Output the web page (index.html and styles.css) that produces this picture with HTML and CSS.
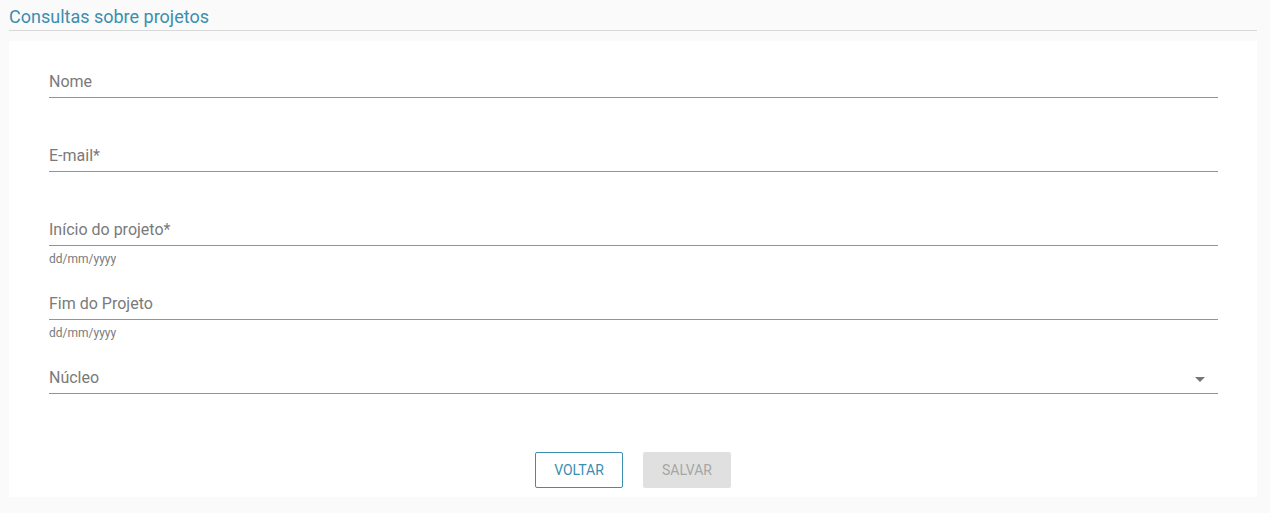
FILE: index.html
```html
<!DOCTYPE html>
<html lang="pt">
<head>
<meta charset="utf-8">
<title>Consultas sobre projetos</title>
<link rel="stylesheet" href="styles.css">
</head>
<body>
<div class="page">
  <h1 class="title">Consultas sobre projetos</h1>
  <form class="card">
    <div class="field">
      <div class="field-row"><span class="label">Nome</span></div>
    </div>
    <div class="field">
      <div class="field-row"><span class="label">E-mail*</span></div>
    </div>
    <div class="field">
      <div class="field-row"><span class="label">Início do projeto*</span></div>
      <div class="hint">dd/mm/yyyy</div>
    </div>
    <div class="field">
      <div class="field-row"><span class="label">Fim do Projeto</span></div>
      <div class="hint">dd/mm/yyyy</div>
    </div>
    <div class="field">
      <div class="field-row"><span class="label">Núcleo</span><span class="arrow"></span></div>
    </div>
    <div class="actions">
      <button type="button" class="btn btn-outline">VOLTAR</button>
      <button type="button" class="btn btn-disabled">SALVAR</button>
    </div>
  </form>
</div>
</body>
</html>
```
FILE: styles.css
```css
* { box-sizing: border-box; }
html, body { margin: 0; padding: 0; background: #fafafa; }
body { font-family: Roboto, "Noto Sans", sans-serif; width: 1270px; height: 513px; overflow: hidden; }
.page { padding: 0 13px 0 9px; }
.title {
  margin: 0;
  font-size: 18px;
  font-weight: 400;
  line-height: 30px;
  height: 31px;
  padding-top: 2px;
  color: #3b8eb0;
  border-bottom: 1px solid #d9d9d9;
  letter-spacing: 0;
}
.card {
  margin-top: 10px;
  background: #fff;
  padding: 9px 39px 9px 40px;
}
.field {
  height: 74px;
  padding-top: 22px;
}
.field-row {
  display: flex;
  align-items: center;
  justify-content: space-between;
  height: 26px;
  padding-bottom: 5px;
  border-bottom: 1px solid #949494;
}
.label {
  font-size: 16px;
  line-height: 20px;
  color: #7a7a7a;
}
.arrow {
  width: 0;
  height: 0;
  border-left: 5px solid transparent;
  border-right: 5px solid transparent;
  border-top: 5px solid #757575;
  margin-right: 13px;
  margin-top: 2px;
}
.hint {
  margin-top: 6px;
  font-size: 12px;
  line-height: 14px;
  color: #7a7a7a;
}
.actions {
  display: flex;
  justify-content: center;
  gap: 20px;
  margin-top: 32px;
  margin-left: -1px;
}
.btn {
  width: 88px;
  height: 36px;
  font-family: Roboto, "Noto Sans", sans-serif;
  font-size: 14px;
  font-weight: 400;
  border-radius: 2px;
  padding: 0;
}
.btn-outline {
  background: #fff;
  border: 1px solid #3b8eb0;
  color: #3b8eb0;
}
.btn-disabled {
  background: #e0e0e0;
  border: none;
  color: #a6a6a6;
}
```
